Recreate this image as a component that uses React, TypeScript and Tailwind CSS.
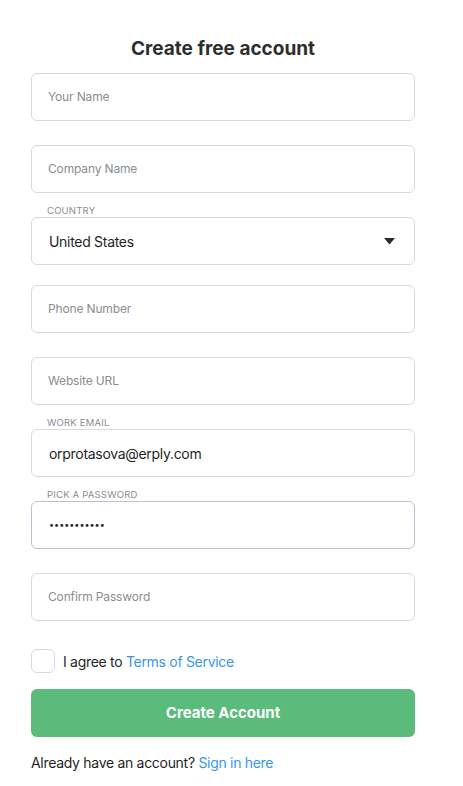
import React from "react";

const font = { fontFamily: "Inter, 'Noto Sans', sans-serif" };

function Box({ children, focused }: { children: React.ReactNode; focused?: boolean }) {
  return (
    <div
      className={`h-[48px] w-full rounded-[6px] border bg-white px-4 flex items-center ${
        focused ? "border-[#b9c2d0]" : "border-[#d7dade]"
      }`}
    >
      {children}
    </div>
  );
}

function Placeholder({ text }: { text: string }) {
  return <span className="text-[12px] tracking-[-0.15px] text-[#8a8d91]">{text}</span>;
}

function Label({ text }: { text: string }) {
  return (
    <div className="h-[12px] leading-[12px] pl-4 text-[9.5px] uppercase tracking-[0.2px] text-[#8a8d91]">
      {text}
    </div>
  );
}

export default function App() {
  return (
    <div className="min-h-[786px] w-[463px] bg-white" style={font}>
      <div className="ml-[31px] w-[384px] pt-[37px]">
        <h1 className="text-center text-[19px] font-bold leading-[24px] text-[#2e2e2e]">
          Create free account
        </h1>
        <div className="mt-[12px]">
          <Box>
            <Placeholder text="Your Name" />
          </Box>
        </div>
        <div className="mt-[24px]">
          <Box>
            <Placeholder text="Company Name" />
          </Box>
        </div>
        <div className="mt-[12px]">
          <Label text="Country" />
          <Box>
            <span className="flex-1 text-[14px] tracking-[-0.3px] text-[#1f1f1f] pl-px">United States</span>
            <svg width="11" height="7" viewBox="0 0 11 7" className="mr-[3px]">
              <path d="M0 0 H11 L5.5 6.5 Z" fill="#2a2a2a" />
            </svg>
          </Box>
        </div>
        <div className="mt-[20px]">
          <Box>
            <Placeholder text="Phone Number" />
          </Box>
        </div>
        <div className="mt-[24px]">
          <Box>
            <Placeholder text="Website URL" />
          </Box>
        </div>
        <div className="mt-[12px]">
          <Label text="Work Email" />
          <Box>
            <span className="text-[14px] tracking-[-0.3px] text-[#1f1f1f] pl-px">orprotasova@erply.com</span>
          </Box>
        </div>
        <div className="mt-[12px]">
          <Label text="Pick a Password" />
          <Box focused>
            <span className="text-[9px] text-[#1f1f1f] pl-px">•••••••••••</span>
          </Box>
        </div>
        <div className="mt-[24px]">
          <Box>
            <Placeholder text="Confirm Password" />
          </Box>
        </div>
        <div className="mt-[28px] flex items-center gap-2">
          <div className="h-[24px] w-[24px] rounded-[6px] border border-[#d7dade] bg-white" />
          <span className="text-[14px] tracking-[-0.3px] text-[#262626]">
            I agree to <span className="text-[#3a96e8]">Terms of Service</span>
          </span>
        </div>
        <button className="mt-[16px] h-[48px] w-full rounded-[6px] bg-[#5bbb7b] text-[15px] font-bold text-white">
          Create Account
        </button>
        <div className="mt-[16px] text-[14px] tracking-[-0.3px] leading-[20px] text-[#1f1f1f]">
          Already have an account? <span className="text-[#3a96e8]">Sign in here</span>
        </div>
      </div>
    </div>
  );
}
